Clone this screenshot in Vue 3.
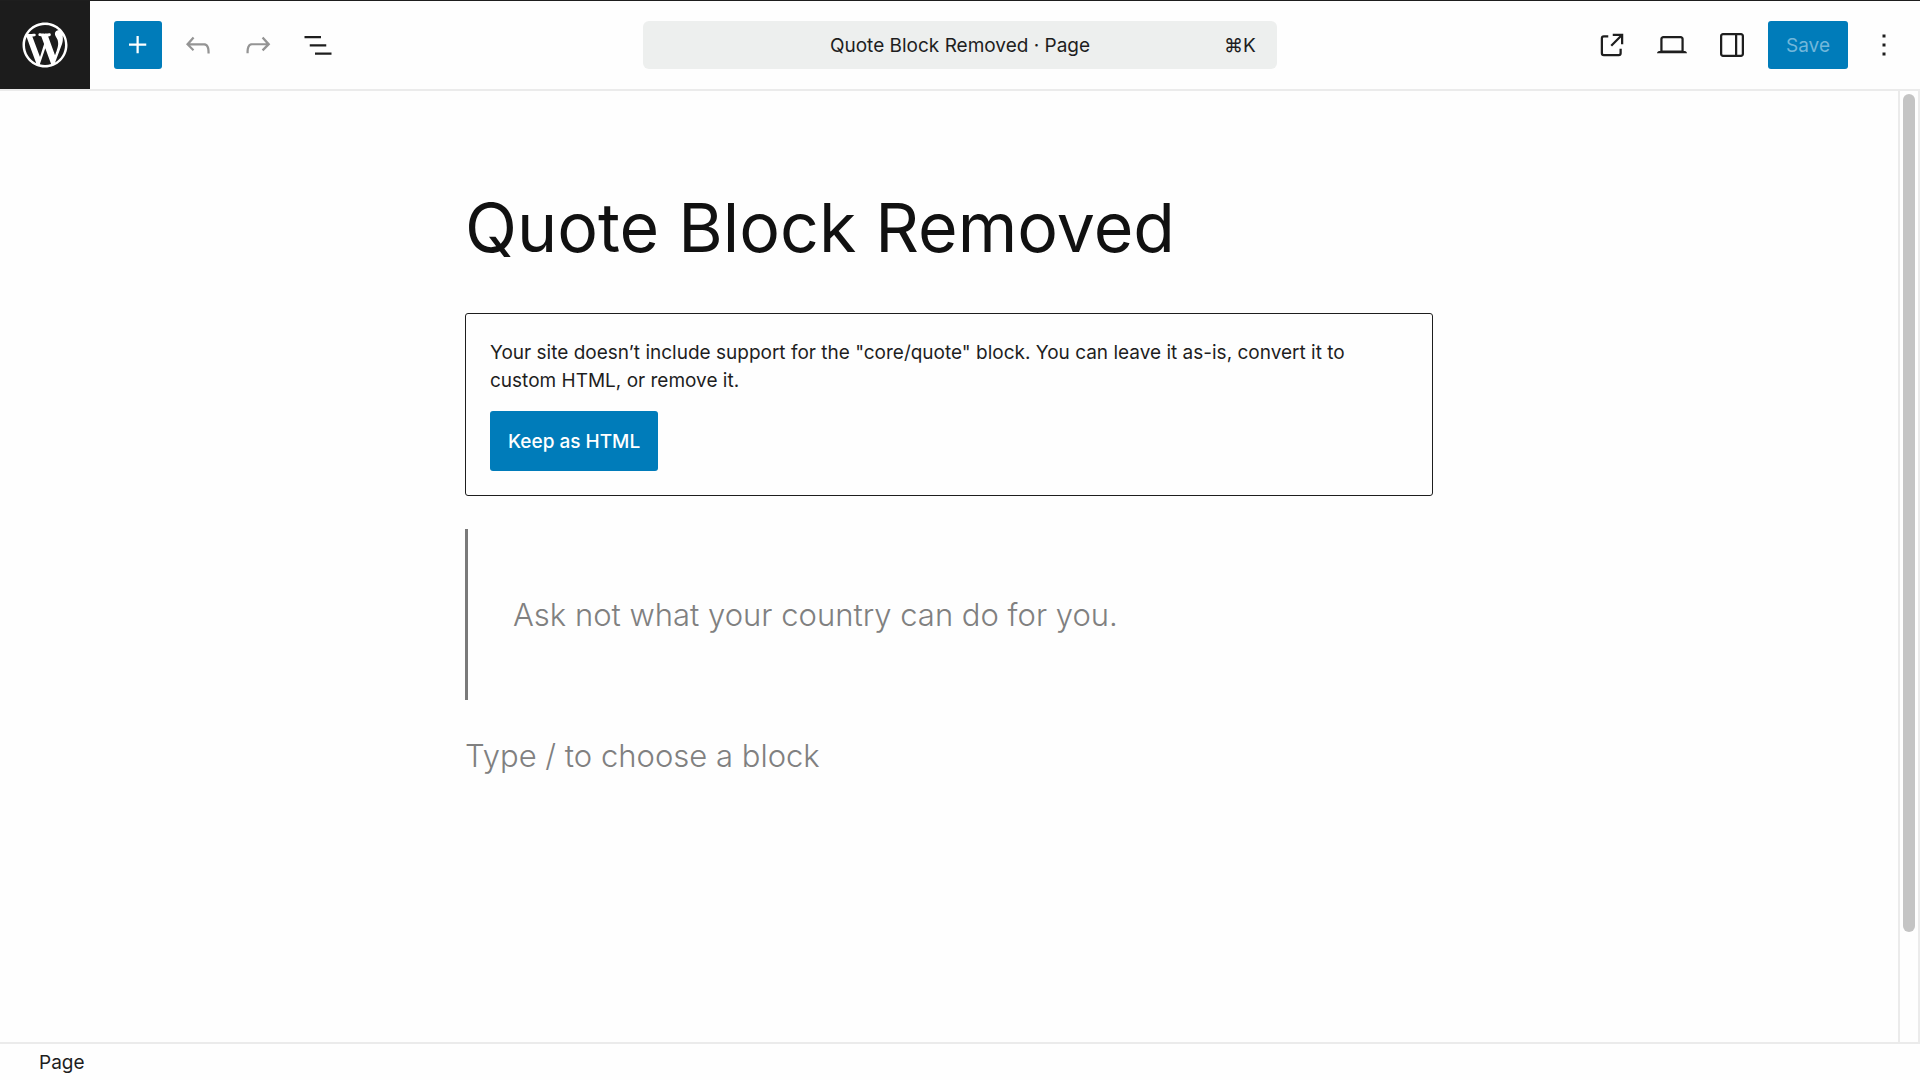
<script setup>
import { ref } from 'vue'

const title = ref('Quote Block Removed')
const paragraph = ref('')

const icons = {
  plus: 'M11 12.5V17.5H12.5V12.5H17.5V11H12.5V6H11V11H6V12.5H11Z',
  undo: 'M18.3 11.7c-.6-.6-1.4-.9-2.3-.9H6.7l2.9-3.3-1.1-1-4.5 5L8.5 16l1-1-2.7-2.7H16c.5 0 .9.2 1.3.5 1 1 1 3.4 1 4.5v.3h1.5v-.2c0-1.5 0-4.3-1.5-5.7z',
  redo: 'M15.6 6.5l-1.1 1 2.9 3.3H8c-.9 0-1.7.3-2.3.9-1.4 1.5-1.4 4.2-1.4 5.6v.2h1.5v-.3c0-1.1 0-3.5 1-4.5.3-.3.7-.5 1.3-.5h9.2L14.5 15l1.1 1.1 4.6-4.6-4.6-5z',
  list: 'M3 6h11v1.5H3V6Zm3.5 5.5h11V13h-11v-1.5ZM21 17H10v1.5h11V17Z',
  external: 'M19.5 4.5h-7V6h4.44l-5.97 5.97 1.06 1.06L18 7.06v4.44h1.5v-7Zm-13 1a2 2 0 0 0-2 2v10a2 2 0 0 0 2 2h10a2 2 0 0 0 2-2v-3H17v3a.5.5 0 0 1-.5.5h-10a.5.5 0 0 1-.5-.5v-10a.5.5 0 0 1 .5-.5h3V5.5h-3Z',
  desktop: 'M20.5 16h-.7V8c0-1.1-.9-2-2-2H6.2c-1.1 0-2 .9-2 2v8h-.7c-.8 0-1.5.7-1.5 1.5h20c0-.8-.7-1.5-1.5-1.5zM5.7 8c0-.3.2-.5.5-.5h11.6c.3 0 .5.2.5.5v7.6H5.7V8z',
  sidebar: 'M18 4H6c-1.1 0-2 .9-2 2v12c0 1.1.9 2 2 2h12c1.1 0 2-.9 2-2V6c0-1.1-.9-2-2-2zm-4 14.5H6c-.3 0-.5-.2-.5-.5V6c0-.3.2-.5.5-.5h8v13zm4.5-.5c0 .3-.2.5-.5.5h-2.5v-13H18c.3 0 .5.2.5.5v12z',
  more: 'M13 19h-2v-2h2v2zm0-6h-2v-2h2v2zm0-6h-2V5h2v2z'
}

const leftTools = [
  { icon: 'plus', label: 'Toggle block inserter', kind: 'primary' },
  { icon: 'undo', label: 'Undo', kind: 'muted' },
  { icon: 'redo', label: 'Redo', kind: 'muted' },
  { icon: 'list', label: 'Document Overview', kind: '' }
]
const rightTools = [
  { icon: 'external', label: 'View Page' },
  { icon: 'desktop', label: 'View' },
  { icon: 'sidebar', label: 'Settings' }
]
</script>

<template>
  <div class="editor">
    <header class="header">
      <div class="header-side">
        <a class="home" href="#" aria-label="View Pages">
          <svg viewBox="-2 -2 24 24" aria-hidden="true">
            <path d="M20 10c0-5.51-4.49-10-10-10C4.48 0 0 4.49 0 10c0 5.52 4.48 10 10 10 5.51 0 10-4.48 10-10zM7.78 15.37L4.37 6.22c.55-.02 1.17-.08 1.17-.08.5-.06.44-1.13-.06-1.11 0 0-1.45.11-2.37.11-.18 0-.37 0-.58-.01C4.12 2.69 6.87 1.11 10 1.11c2.33 0 4.45.87 6.05 2.34-.68-.11-1.65.39-1.65 1.58 0 .74.45 1.36.9 2.1.35.61.55 1.36.55 2.46 0 1.49-1.4 5-1.4 5l-3.03-8.37c.54-.02.82-.17.82-.17.5-.05.44-1.25-.06-1.22 0 0-1.44.12-2.38.12-.87 0-2.33-.12-2.33-.12-.5-.03-.56 1.2-.06 1.22l.92.08 1.26 3.41zM17.41 10c.24-.64.74-1.87.43-4.25.7 1.29 1.05 2.71 1.05 4.25 0 3.29-1.73 6.24-4.4 7.78.97-2.59 1.94-5.2 2.92-7.78zM6.1 18.09C3.12 16.65 1.11 13.53 1.11 10c0-1.3.23-2.48.72-3.59C3.25 10.3 4.67 14.2 6.1 18.09zm4.03-6.63l2.58 6.98c-.86.29-1.76.45-2.71.45-.79 0-1.57-.11-2.29-.33.81-2.38 1.62-4.74 2.42-7.1z" />
          </svg>
        </a>
        <div class="tools tools-left">
          <button
            v-for="tool in leftTools"
            :key="tool.icon"
            type="button"
            class="icon-button"
            :class="tool.kind"
            :aria-label="tool.label"
          >
            <svg viewBox="0 0 24 24" aria-hidden="true"><path :d="icons[tool.icon]" /></svg>
          </button>
        </div>
      </div>

      <button type="button" class="command-bar">
        <span class="command-title">{{ title }} · Page</span>
        <span class="command-key">⌘K</span>
      </button>

      <div class="header-side header-end">
        <div class="tools tools-right">
          <button
            v-for="tool in rightTools"
            :key="tool.icon"
            type="button"
            class="icon-button"
            :aria-label="tool.label"
          >
            <svg viewBox="0 0 24 24" aria-hidden="true"><path :d="icons[tool.icon]" /></svg>
          </button>
          <button type="button" class="save" disabled>Save</button>
          <button type="button" class="icon-button" aria-label="Options">
            <svg viewBox="0 0 24 24" aria-hidden="true"><path :d="icons.more" /></svg>
          </button>
        </div>
      </div>
    </header>

    <div class="body">
      <main class="canvas">
        <div class="content">
          <h1 class="title">{{ title }}</h1>

          <section class="warning">
            <p class="warning-text">
              Your site doesn’t include support for the "core/quote" block. You can leave it as-is, convert it to custom HTML, or remove it.
            </p>
            <button type="button" class="keep">Keep as HTML</button>
          </section>

          <blockquote class="quote">
            <p>Ask not what your country can do for you.</p>
          </blockquote>

          <input
            v-model="paragraph"
            class="paragraph"
            type="text"
            aria-label="Empty block"
            placeholder="Type / to choose a block"
          />
        </div>
      </main>
      <div class="scroll-track" aria-hidden="true">
        <div class="scroll-thumb"></div>
      </div>
    </div>

    <footer class="footer">Page</footer>
  </div>
</template>

<style>
body {
  background: #fefefe;
}
</style>

<style scoped>
.editor {
  display: flex;
  flex-direction: column;
  min-height: 100vh;
  color: #1e1e1e;
  font-family: Inter, "Liberation Sans", sans-serif;
  font-size: 19px;
  line-height: 28px;
}

button,
input {
  margin: 0;
  padding: 0;
  border: 0;
  background: none;
  color: inherit;
  font: inherit;
}

svg {
  display: block;
  fill: currentColor;
}

.header {
  display: grid;
  grid-template-columns: 1fr minmax(0, 33%) 1fr;
  align-items: center;
  height: 91px;
  box-sizing: border-box;
  border-top: 1px solid #1e1e1e;
  border-bottom: 2px solid #ebebeb;
}

.header-side {
  display: flex;
  align-items: center;
}

.header-end {
  justify-content: flex-end;
}

.home {
  display: flex;
  align-items: center;
  justify-content: center;
  width: 90px;
  height: 88px;
  background: #1c1c1c;
  color: #fff;
}

.home svg {
  width: 54px;
  height: 54px;
}

.tools {
  display: flex;
  align-items: center;
  gap: 12px;
}

.tools-left {
  padding-left: 24px;
}

.tools-right {
  padding-right: 12px;
}

.icon-button {
  display: flex;
  align-items: center;
  justify-content: center;
  width: 48px;
  height: 48px;
  border-radius: 3px;
}

.icon-button svg {
  width: 36px;
  height: 36px;
}

.primary,
.save,
.keep {
  background: #007cba;
  color: #fff;
}

.muted {
  color: #949494;
}

.command-bar {
  display: grid;
  grid-template-columns: 1fr auto 1fr;
  align-items: center;
  height: 48px;
  padding: 2px 21px 0;
  border-radius: 6px;
  background: #edefee;
}

.command-title {
  grid-column: 2;
}

.command-key {
  text-align: right;
}

.save {
  width: 80px;
  height: 48px;
  padding-top: 2px;
  border-radius: 3px;
  color: #72b7da;
}

.body {
  display: flex;
  flex: 1;
}

.canvas {
  flex: 1;
  min-width: 0;
}

.content {
  max-width: 968px;
  margin: 0 auto;
  padding: 96px 0;
}

.title {
  margin: 0 0 46px;
  color: #111;
  font-size: 68px;
  font-weight: 400;
  line-height: 80px;
}

.warning {
  margin-bottom: 33px;
  padding: 25px 24px 24px;
  border: 1px solid #1e1e1e;
  border-radius: 3px;
}

.warning-text {
  margin: 0 0 16px;
}

.keep {
  display: block;
  height: 60px;
  padding: 2px 18px 0;
  border-radius: 3px;
  font-weight: 500;
}

.quote {
  margin: 0 0 34px;
  padding: 64px 0 64px 45px;
  border-left: 3px solid #7a7a7a;
  color: #808080;
}

.quote p {
  margin: 0;
}

.quote p,
.paragraph {
  font-size: 31px;
  font-weight: 300;
  line-height: 43px;
}

.paragraph {
  display: block;
  width: 100%;
}

.paragraph::placeholder {
  color: #808080;
  opacity: 1;
}

.scroll-track {
  width: 18px;
  padding-top: 3px;
  border-left: 2px solid #ebebeb;
  border-right: 2px solid #ebebeb;
}

.scroll-thumb {
  width: 12px;
  height: calc(88% + 4px);
  margin: 0 auto;
  border-radius: 6px;
  background: #c4c4c4;
}

.footer {
  padding: 5px 39px 3px;
  border-top: 2px solid #ebebeb;
}
</style>
